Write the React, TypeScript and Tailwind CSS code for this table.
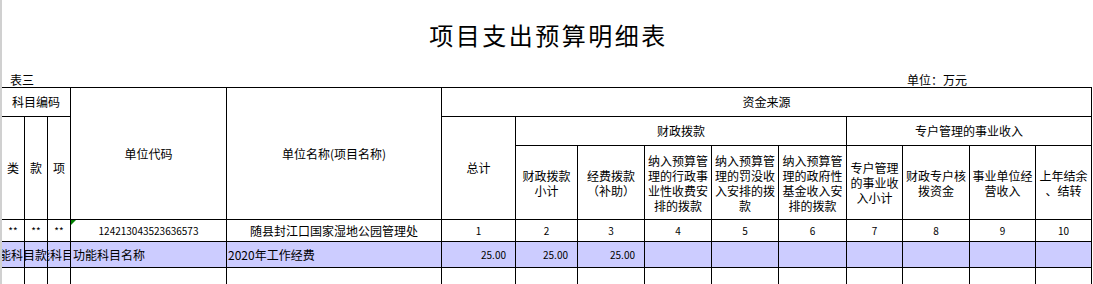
const cjk = "font-['Noto_Sans_CJK_SC',sans-serif]";
const mono = "font-['Liberation_Mono',monospace]";

// one grid cell: right + bottom rule, text centred
const cell = `border-r border-b border-black flex items-center justify-center text-center ${cjk}`;

function Sub({ lines, span }: { lines: string[]; span?: string }) {
  return (
    <div className={`${cell} leading-[15px] ${span ?? ""}`}>
      <div>
        {lines.map((l, i) => (
          <div key={i} className="whitespace-nowrap">
            {l}
          </div>
        ))}
      </div>
    </div>
  );
}

const subHeads: string[][] = [
  ["财政拨款", "小计"],
  ["经费拨款", "（补助）"],
  ["纳入预算管", "理的行政事", "业性收费安", "排的拨款"],
  ["纳入预算管", "理的罚没收", "入安排的拨", "款"],
  ["纳入预算管", "理的政府性", "基金收入安", "排的拨款"],
  ["专户管理", "的事业收", "入小计"],
  ["财政专户核", "拨资金"],
  ["事业单位经", "营收入"],
  ["上年结余", "、结转"],
];

export default function App() {
  const nums = ["1", "2", "3", "4", "5", "6", "7", "8", "9", "10"];
  const amounts = ["25.00", "25.00", "25.00", "", "", "", "", "", "", ""];

  return (
    <div className={`w-[1093px] h-[284px] overflow-hidden bg-white text-black flex ${cjk}`}>
      {/* window edge */}
      <div className="w-[2px] shrink-0 bg-[#d0d0d0]" />

      <div className="flex flex-col w-[1091px]">
        <div className="h-[70px] shrink-0 flex items-center justify-center pl-[2px]">
          <h1 className="text-[24px] tracking-[2.5px] leading-none font-normal">项目支出预算明细表</h1>
        </div>

        <div className="h-[17px] shrink-0 flex items-end text-[12px] leading-[15px]">
          <div className="w-[905px] pl-[8px]">表三</div>
          <div>单位：万元</div>
        </div>

        <div className="w-[1090px] shrink-0 grid grid-cols-[23px_23px_23px_156px_215px_74px_62px_67px_67px_67px_68px_56px_67px_66px_56px] grid-rows-[29px_29px_74px_22px_26px_26px] border-t border-black text-[12px]">
          {/* header row 1 */}
          <div className={`${cell} col-span-3`}>科目编码</div>
          <div className={`${cell} row-span-3`}>单位代码</div>
          <div className={`${cell} row-span-3`}>单位名称(项目名称)</div>
          <div className={`${cell} col-span-10`}>资金来源</div>

          {/* header row 2 */}
          <div className={`${cell} row-span-2`}>类</div>
          <div className={`${cell} row-span-2`}>款</div>
          <div className={`${cell} row-span-2`}>项</div>
          <div className={`${cell} row-span-2`}>总计</div>
          <div className={`${cell} col-span-5`}>财政拨款</div>
          <div className={`${cell} col-span-4`}>专户管理的事业收入</div>

          {/* header row 3 */}
          {subHeads.map((lines, i) => (
            <Sub key={i} lines={lines} />
          ))}

          {/* code row */}
          <div className={`${cell} ${mono} text-[10px]`}>**</div>
          <div className={`${cell} ${mono} text-[10px]`}>**</div>
          <div className={`${cell} ${mono} text-[10px]`}>**</div>
          <div className={`${cell} ${mono} text-[10px] relative`}>
            <span className="absolute left-0 top-0 w-0 h-0 border-t-[5px] border-r-[5px] border-t-[#008000] border-r-transparent" />
            124213043523636573
          </div>
          <div className={cell}>随县封江口国家湿地公园管理处</div>
          {nums.map((n) => (
            <div key={n} className={`${cell} ${mono} text-[10px]`}>
              {n}
            </div>
          ))}

          {/* data row */}
          <div className={`${cell} bg-[#ccccff] relative`}>
            <div className="absolute left-0 top-0 h-full w-[45px] overflow-hidden flex items-center justify-end z-10">
              <span className="whitespace-nowrap">功能科目款</span>
            </div>
          </div>
          <div className={`${cell} bg-[#ccccff]`} />
          <div className={`${cell} bg-[#ccccff] relative`}>
            <div className="absolute left-0 top-0 h-full w-[22px] overflow-hidden flex items-center justify-end z-10">
              <span className="whitespace-nowrap mr-[-4px]">功能科目</span>
            </div>
          </div>
          <div className={`${cell} bg-[#ccccff] justify-start pl-[2px]`}>功能科目名称</div>
          <div className={`${cell} bg-[#ccccff] justify-start pl-[1px]`}>2020年工作经费</div>
          {amounts.map((a, i) => (
            <div key={i} className={`${cell} bg-[#ccccff] justify-end pr-[9px] ${mono} text-[10px]`}>
              {a}
            </div>
          ))}

          {/* empty row */}
          {Array.from({ length: 15 }).map((_, i) => (
            <div key={i} className="border-r border-b border-black" />
          ))}
        </div>
      </div>
    </div>
  );
}
